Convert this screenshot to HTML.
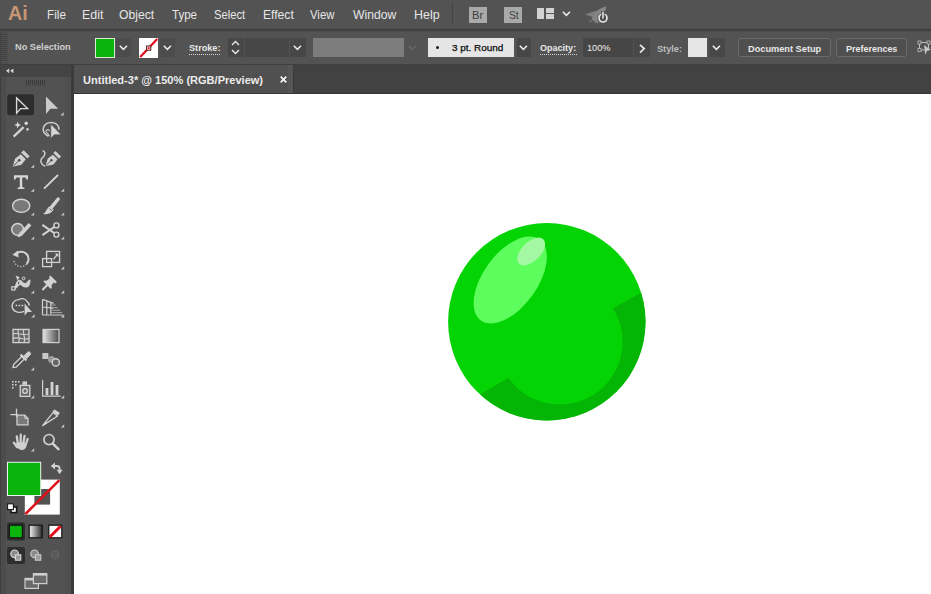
<!DOCTYPE html>
<html>
<head>
<meta charset="utf-8">
<style>
*{box-sizing:border-box;margin:0;padding:0}
html,body{width:931px;height:594px;overflow:hidden;background:#535353;font-family:"Liberation Sans",sans-serif;}
#app{position:relative;width:931px;height:594px;background:#535353;overflow:hidden}
.abs{position:absolute}
.t{position:absolute;white-space:nowrap;color:#e2e2e2;line-height:1;transform-origin:0 50%}
/* menu bar */
#menubar{position:absolute;left:0;top:0;width:931px;height:30px;background:#535353}
#menubar .m{font-size:13.5px;top:7.6px;color:#e6e6e6}
#sep1{position:absolute;left:0;top:28px;width:931px;height:4px;background:linear-gradient(180deg,#4d4d4d 0 1px,#404040 1px 2px,#414141 2px 3px,#4e4e4e 3px 4px)}
/* control bar */
#ctrl{position:absolute;left:0;top:32px;width:931px;height:32px;background:#535353}
#ctrl0{position:absolute;left:0;top:31px;width:931px;height:1px;background:#535353}
.lbl{font-size:10.6px;color:#e8e8e8;font-weight:bold}
.dk{position:absolute;background:#464646}
svg{position:absolute;overflow:visible}
/* tab strip */
#tabstrip{position:absolute;left:72px;top:64px;width:859px;height:30px;background:#424242}
#tab{position:absolute;left:74px;top:65px;width:218.5px;height:28px;background:#505050}
#canvas{position:absolute;left:74px;top:94px;width:857px;height:500px;background:#fff}
/* toolbox */
#tbhead{position:absolute;left:0;top:64px;width:72px;height:13px;background:#444}
#tools{position:absolute;left:0;top:77px;width:72px;height:517px;background:linear-gradient(90deg,#3e3e3e 0 1px,#4c4c4c 1px 6px,#525252 6px 65px,#4f4f4f 65px 71px,#444 71px 72px)}
#tbsep{position:absolute;left:71.4px;top:64px;width:2.6px;height:530px;background:#3b3b3b}
#tabline{position:absolute;left:74px;top:92.6px;width:857px;height:1.4px;background:#363636}
#topline{position:absolute;left:0;top:64px;width:931px;height:1px;background:#3f3f3f}
</style>
</head>
<body>
<div id="app">
  <!-- MENU BAR -->
  <div id="menubar">
    <div class="t" style="left:8px;top:3.9px;font-size:19.7px;font-weight:bold;color:#c69674">Ai</div>
    <div class="t m" style="left:46.6px;transform:scaleX(.869)">File</div>
    <div class="t m" style="left:81.6px;transform:scaleX(.92)">Edit</div>
    <div class="t m" style="left:119.3px;transform:scaleX(.902)">Object</div>
    <div class="t m" style="left:171.6px;transform:scaleX(.855)">Type</div>
    <div class="t m" style="left:214px;transform:scaleX(.831)">Select</div>
    <div class="t m" style="left:262.7px;transform:scaleX(.898)">Effect</div>
    <div class="t m" style="left:310px;transform:scaleX(.841)">View</div>
    <div class="t m" style="left:353.2px;transform:scaleX(.901)">Window</div>
    <div class="t m" style="left:413.8px;transform:scaleX(.922)">Help</div>
    <div class="abs" style="left:452px;top:2px;width:1px;height:22px;background:#454545"></div>
    <div class="abs" style="left:468.6px;top:6.8px;width:18px;height:16px;background:#a9a9a9"></div>
    <div class="t" style="left:472px;top:9.6px;font-size:11.4px;color:#3e3e3e;transform:scaleX(.98)">Br</div>
    <div class="abs" style="left:504.4px;top:6.8px;width:17.2px;height:16px;background:#a9a9a9"></div>
    <div class="t" style="left:508.6px;top:9.6px;font-size:11.4px;color:#3e3e3e;transform:scaleX(.9)">St</div>
    <!-- workspace icon -->
    <div class="abs" style="left:537px;top:8px;width:7px;height:11px;background:#d2d2d2"></div>
    <div class="abs" style="left:545.6px;top:8px;width:8.8px;height:5.2px;background:#d2d2d2"></div>
    <div class="abs" style="left:545.6px;top:14.4px;width:8.8px;height:4.6px;background:#d2d2d2"></div>
    <svg style="left:562.4px;top:11.2px" width="9" height="6"><path d="M.8 .8 L4.4 4.4 L8 .8" stroke="#ececec" stroke-width="1.5" fill="none"/></svg>
    <!-- rocket -->
    <svg style="left:584px;top:4px" width="26" height="22" viewBox="584 4 26 22">
      <path d="M592 19.5 C592 14 598 8 606.4 6.4 C605.6 14 600 20.4 595 22 Z" fill="#858585"/>
      <path d="M585 14.6 L596.4 10.4 L592.6 17 Z" fill="#7e7e7e"/>
      <path d="M594.6 23.4 L598.4 18.4 L600 22.4 Z" fill="#7e7e7e"/>
      <path d="M590.8 19 L588.6 22.8 L593 21.4 Z" fill="#6c6c6c"/>
      <circle cx="603" cy="18" r="5.6" fill="#535353"/>
      <circle cx="603" cy="18" r="4" fill="none" stroke="#e6e6e6" stroke-width="1.7"/>
      <rect x="601.4" y="11" width="3.2" height="8" fill="#3c3c3c"/>
      <rect x="602.2" y="11.6" width="1.6" height="7" fill="#eaeaea"/>
    </svg>
  </div>
  <div id="sep1"></div>

  <!-- CONTROL BAR -->
  <div id="ctrl">
    <div class="abs" style="left:0;top:0;width:7.5px;height:32px;background:#4d4d4d"></div>
    <div class="abs" style="left:1px;top:2px;width:6px;height:28px;background:repeating-linear-gradient(180deg,#404040 0 1px,#525252 1px 2px)"></div>
    <div class="abs" style="left:0;top:0;width:1px;height:32px;background:#434343"></div>
    <div class="t" style="left:15px;top:10.8px;color:#cfcfcf;font-size:9.1px;font-weight:bold;transform:scaleX(1.012)">No Selection</div>
    <!-- fill swatch -->
    <div class="abs" style="left:94.6px;top:5.6px;width:20px;height:20px;background:#0bb40b;border:1px solid #d4ecd4"></div>
    <div class="dk" style="left:116px;top:6px;width:15px;height:19px;background:#4c4c4c"></div>
    <svg style="left:119.4px;top:13.2px" width="9" height="6"><path d="M.8 .8 L4.4 4.4 L8 .8" stroke="#ececec" stroke-width="1.5" fill="none"/></svg>
    <!-- stroke swatch -->
    <div class="abs" style="left:139px;top:5.6px;width:19.4px;height:20px;background:#fff"></div>
    <svg style="left:139px;top:5.6px" width="19.4" height="20"><path d="M1.2 19 L18.2 1" stroke="#dc0a1c" stroke-width="2.2"/><rect x="7.6" y="8" width="4.2" height="4.2" fill="#fff" stroke="#5a1010" stroke-width="1"/><rect x="8.8" y="9.2" width="1.8" height="1.8" fill="#dc0a1c"/></svg>
    <div class="dk" style="left:160px;top:6px;width:15px;height:19px;background:#4c4c4c"></div>
    <svg style="left:163.2px;top:13.2px" width="9" height="6"><path d="M.8 .8 L4.4 4.4 L8 .8" stroke="#ececec" stroke-width="1.5" fill="none"/></svg>
    <!-- Stroke -->
    <div class="t lbl" style="left:189px;top:11.4px;font-size:9.5px;transform:scaleX(.961)">Stroke:</div>
    <div class="abs" style="left:189px;top:22px;width:32px;height:1px;background:repeating-linear-gradient(90deg,#d6d6d6 0 1px,transparent 1px 2px)"></div>
    <div class="dk" style="left:228px;top:6.4px;width:77.6px;height:18.6px;background:#474747"></div>
    <div class="abs" style="left:243.6px;top:6.4px;width:1px;height:18.6px;background:#525252"></div>
    <div class="abs" style="left:289px;top:6.4px;width:1px;height:18.6px;background:#525252"></div>
    <svg style="left:231.4px;top:8.4px" width="9" height="15"><path d="M1 5 L4.5 1.6 L8 5 M1 10 L4.5 13.4 L8 10" stroke="#e8e8e8" stroke-width="1.4" fill="none"/></svg>
    <svg style="left:292.6px;top:13.2px" width="9" height="6"><path d="M.8 .8 L4.4 4.4 L8 .8" stroke="#ececec" stroke-width="1.5" fill="none"/></svg>
    <!-- grey field -->
    <div class="abs" style="left:313.2px;top:6px;width:90.4px;height:19.4px;background:#7d7d7d"></div>
    <svg style="left:407.6px;top:13.2px" width="9" height="6"><path d="M.8 .8 L4.4 4.4 L8 .8" stroke="#656565" stroke-width="1.5" fill="none"/></svg>
    <!-- brush field -->
    <div class="abs" style="left:428px;top:6.1px;width:85.8px;height:18.8px;background:#e5e5e5"></div>
    <div class="abs" style="left:436px;top:13.6px;width:3.3px;height:3.3px;border-radius:50%;background:#1c1c1c"></div>
    <div class="t" style="left:452.2px;top:11.4px;font-size:9.5px;color:#0c0c0c;-webkit-text-stroke:.25px #0c0c0c;transform:scaleX(1.046)">3 pt. Round</div>
    <div class="dk" style="left:516.6px;top:6.4px;width:14.6px;height:18.2px;background:#474747"></div>
    <svg style="left:519.4px;top:13.2px" width="9" height="6"><path d="M.8 .8 L4.4 4.4 L8 .8" stroke="#ececec" stroke-width="1.5" fill="none"/></svg>
    <!-- Opacity -->
    <div class="t lbl" style="left:540px;top:11.4px;font-size:9.5px;transform:scaleX(.951)">Opacity:</div>
    <div class="abs" style="left:540px;top:22px;width:37px;height:1px;background:repeating-linear-gradient(90deg,#d6d6d6 0 1px,transparent 1px 2px)"></div>
    <div class="dk" style="left:583px;top:6.2px;width:50px;height:18.4px;background:#464646"></div>
    <div class="t" style="left:586.6px;top:11.4px;font-size:9.5px;color:#ececec;transform:scaleX(.97)">100%</div>
    <div class="dk" style="left:634px;top:6.2px;width:16px;height:18.4px;background:#484848"></div>
    <svg style="left:639px;top:11.6px" width="7" height="10"><path d="M1 .8 L5.2 4.6 L1 8.6" stroke="#ececec" stroke-width="1.6" fill="none"/></svg>
    <!-- Style -->
    <div class="t lbl" style="left:656.8px;top:11.7px;font-size:9.5px;color:#bcbcbc;transform:scaleX(.965)">Style:</div>
    <div class="abs" style="left:688px;top:6.1px;width:19.2px;height:18.8px;background:#e6e6e6"></div>
    <div class="dk" style="left:708.6px;top:6.4px;width:16.4px;height:18.2px;background:#484848"></div>
    <svg style="left:712px;top:13.4px" width="9" height="6"><path d="M.8 .8 L4.4 4.4 L8 .8" stroke="#ececec" stroke-width="1.5" fill="none"/></svg>
    <!-- buttons -->
    <div class="abs" style="left:738px;top:6.4px;width:93px;height:18.4px;border:1px solid #6a6a6a;border-radius:3px;background:#4f4f4f"></div>
    <div class="t lbl" style="left:747.7px;top:11.7px;font-size:9.5px;transform:scaleX(.97)">Document Setup</div>
    <div class="abs" style="left:836px;top:6.4px;width:71px;height:18.4px;border:1px solid #6a6a6a;border-radius:3px;background:#4f4f4f"></div>
    <div class="t lbl" style="left:845.9px;top:11.7px;font-size:9.5px;transform:scaleX(.944)">Preferences</div>
    <svg style="left:916px;top:7px" width="15" height="17"><path d="M3.5 3.5 H12.5 V11 H3.5 Z" stroke="#bdbdbd" fill="none" stroke-width="1"/><rect x="2" y="2" width="3" height="3" fill="#535353" stroke="#bdbdbd" stroke-width=".8"/><rect x="2" y="9.5" width="3" height="3" fill="#535353" stroke="#bdbdbd" stroke-width=".8"/><rect x="11" y="2" width="3" height="3" fill="#535353" stroke="#bdbdbd" stroke-width=".8"/><path d="M8 6 L15 11 L11 11.6 L9.4 16 Z" fill="#c8c8c8"/></svg>
  </div>

  <!-- TAB STRIP -->
  <div id="tabstrip"></div>
  <div id="tab"></div>
  <div id="tabline"></div>
  <div class="abs" style="left:288px;top:65px;width:4.5px;height:28px;background:#555"></div>
  <div class="abs" style="left:292.5px;top:65px;width:1.2px;height:28px;background:#3a3a3a"></div>
  <div class="t" style="left:83.4px;top:74.1px;font-size:11.6px;font-weight:bold;color:#ececec;transform:scaleX(.952)">Untitled-3* @ 150% (RGB/Preview)</div>
  <svg style="left:279.6px;top:75.6px" width="7" height="7"><path d="M.7 .7 L6.3 6.3 M6.3 .7 L.7 6.3" stroke="#f0f0f0" stroke-width="1.8"/></svg>
  <div id="canvas">
    <svg style="left:-74px;top:-94px" width="931" height="594" viewBox="0 0 931 594">
      <defs><clipPath id="bc"><circle cx="546.8" cy="321.8" r="98.7"/></clipPath></defs>
      <circle cx="546.8" cy="321.8" r="98.7" fill="#04d304"/>
      <path clip-path="url(#bc)" d="M660 282.2 L605.8 312.3 L516.6 373.3 L465 403.2 V440 H660 Z" fill="#05b505"/>
      <circle cx="559.8" cy="341.8" r="62.8" fill="#04d304"/>
      <ellipse cx="510.2" cy="280" rx="50" ry="27" transform="rotate(-54 510.2 280)" fill="#5cfd5c"/>
      <ellipse cx="531.2" cy="251.5" rx="17.2" ry="9.5" transform="rotate(-45 531.2 251.5)" fill="#a4f8a4"/>
    </svg>
  </div>

  <!-- TOOLBOX -->
  <div id="tbhead"></div>
  <div id="tools"></div>
  <div id="tbsep"></div>
  <div id="topline"></div>
  <svg id="tb" style="left:0;top:0" width="74" height="594" viewBox="0 0 74 594">
    <defs>
      <linearGradient id="gr1" x1="0" x2="1" y1="0" y2="0"><stop offset="0" stop-color="#e6e6e6"/><stop offset="1" stop-color="#4a4a4a"/></linearGradient>
      <linearGradient id="gr2" x1="0" x2="1" y1="0" y2="0"><stop offset="0" stop-color="#f4f4f4"/><stop offset="1" stop-color="#2a2a2a"/></linearGradient>
    </defs>
    <!-- header -->
    <path d="M9.2 68.4 L6 70.8 L9.2 73.2 Z M13.4 68.4 L10.2 70.8 L13.4 73.2 Z" fill="#d8d8d8"/>
    <g stroke="#3b3b3b" stroke-width="1">
      <path d="M26.5 80v5.5M28.5 80v5.5M30.5 80v5.5M32.5 80v5.5M34.5 80v5.5M36.5 80v5.5M38.5 80v5.5M40.5 80v5.5M42.5 80v5.5M44.5 80v5.5"/>
    </g>
    <!-- R1 -->
    <rect x="7.2" y="94.3" width="26.8" height="21" rx="2.5" fill="#2d2d2d"/>
    <path d="M16.6 98 V113.2 L20.6 108.6 H27.6 Z" fill="none" stroke="#dadada" stroke-width="1.4" stroke-linejoin="miter"/>
    <path d="M46 96.6 V114 L50.4 108.8 H58.2 Z" fill="#cacaca"/>
    <path d="M63.7 112.3 V115.5 H60.3 Z" fill="#c4c4c4"/>
    <!-- R2 wand -->
    <path d="M13.6 136.6 L23.6 127.2" stroke="#d2d2d2" stroke-width="2.3"/>
    <path d="M17.7 121.4 L18.7 123.9 L21.2 124.9 L18.7 125.9 L17.7 128.4 L16.7 125.9 L14.2 124.9 L16.7 123.9 Z" fill="#d8d8d8"/>
    <circle cx="26.2" cy="123.3" r="1.7" fill="#dcdcdc"/>
    <circle cx="27.5" cy="129.4" r="1.3" fill="#d0d0d0"/>
    <!-- lasso -->
    <path d="M49.6 135.8 C45.6 135.6 43 132.6 43.2 129 C43.6 124.6 47.6 122.2 51.6 122.4 C56 122.6 59.2 125.2 58.8 129.6" fill="none" stroke="#cdcdcd" stroke-width="1.5"/>
    <path d="M49.4 131.2 a1.7 1.7 0 1 0 -2.6 1.6 c1.6 .6 2 2.4 .6 3.8" fill="none" stroke="#cdcdcd" stroke-width="1.1"/>
    <path d="M50.8 124 V138.6 L54.2 134.8 H61.2 Z" fill="#d6d6d6" stroke="#535353" stroke-width=".7"/>
    <!-- R3 pens -->
    <g transform="translate(12.6,149.8)"><path d="M0 17 L2.6 8.6 L8.2 4.4 L13.2 9.4 L8.8 15 Z" fill="#d0d0d0"/>
        <path d="M8.6 2.6 L11 0.4 L17 6.4 L14.8 8.8 Z" fill="#d0d0d0"/>
        <path d="M0.6 16.4 L6 11" stroke="#4a4a4a" stroke-width="1"/>
        <circle cx="6.6" cy="10.4" r="1.3" fill="#4a4a4a"/></g>
    <path d="M34.2 164.5 V167.7 H30.8 Z" fill="#c4c4c4"/>
    <g transform="translate(45.4,150.6) scale(.92)"><path d="M0 17 L2.6 8.6 L8.2 4.4 L13.2 9.4 L8.8 15 Z" fill="#d0d0d0"/>
        <path d="M8.6 2.6 L11 0.4 L17 6.4 L14.8 8.8 Z" fill="#d0d0d0"/>
        <path d="M0.6 16.4 L6 11" stroke="#4a4a4a" stroke-width="1"/>
        <circle cx="6.6" cy="10.4" r="1.3" fill="#4a4a4a"/></g>
    <path d="M42.6 150.6 C46.6 152 44.6 156 42.2 158 C39.6 160.4 41 165 45 166.4" fill="none" stroke="#d0d0d0" stroke-width="1.4"/>
    <!-- R4 -->
    <path d="M13.9 175.2 H28 V179.6 H26.4 C26.4 178 25.8 177.4 24.4 177.4 H22.2 V186.6 C22.2 187.4 22.8 187.6 24.4 187.6 V188.9 H17.6 V187.6 C19.2 187.6 19.8 187.4 19.8 186.6 V177.4 H17.6 C16.2 177.4 15.6 178 15.6 179.6 H13.9 Z" fill="#d6d6d6"/>
    <path d="M34.2 188.6 V191.8 H30.8 Z" fill="#c4c4c4"/>
    <path d="M44 188.6 L58 175" stroke="#d2d2d2" stroke-width="1.9"/>
    <path d="M64.2 188.6 V191.8 H60.8 Z" fill="#c4c4c4"/>
    <!-- R5 -->
    <ellipse cx="21.2" cy="205.8" rx="8.6" ry="6.6" fill="#797979" stroke="#d4d4d4" stroke-width="1.4"/>
    <path d="M34.2 212.4 V215.6 H30.8 Z" fill="#c4c4c4"/>
    <path d="M58.2 199 L52 206.6" stroke="#d2d2d2" stroke-width="3.4" stroke-linecap="round"/>
    <path d="M50 206 L53.6 209.4 C52 213 47.6 214.8 43.2 214 C46 212.6 46.4 208.4 50 206 Z" fill="#d2d2d2"/>
    <path d="M49.6 208.6 L52 210.8" stroke="#535353" stroke-width=".9"/>
    <path d="M64.2 212.4 V215.6 H60.8 Z" fill="#c4c4c4"/>
    <!-- R6 -->
    <circle cx="17.6" cy="229.4" r="5.9" fill="#7c7c7c" stroke="#d4d4d4" stroke-width="1.5"/>
    <path d="M30 224.2 L21 234" stroke="#d2d2d2" stroke-width="3.6"/>
    <path d="M19.4 232.6 L22.6 235.6 L17.6 237.6 Z" fill="#d2d2d2"/>
    <path d="M34.2 236.4 V239.6 H30.8 Z" fill="#c4c4c4"/>
    <circle cx="56.4" cy="225.4" r="2.5" fill="none" stroke="#d2d2d2" stroke-width="1.4"/>
    <circle cx="56.4" cy="234.6" r="2.5" fill="none" stroke="#d2d2d2" stroke-width="1.4"/>
    <path d="M54.2 227 L42.4 235.2 M54.2 233 L42.4 224.8" stroke="#d2d2d2" stroke-width="2.1"/>
    <path d="M64.2 236.4 V239.6 H60.8 Z" fill="#c4c4c4"/>
    <!-- R7 rotate -->
    <path d="M16.6 253.4 A7.3 7.3 0 0 1 26.6 264" fill="none" stroke="#d2d2d2" stroke-width="2"/>
    <path d="M26.6 264 A7.3 7.3 0 0 1 13.8 260.4" fill="none" stroke="#bcbcbc" stroke-width="1.3" stroke-dasharray="1.4 1.5"/>
    <path d="M12.4 254.8 L18 250.6 L18.6 257.6 Z" fill="#d2d2d2"/>
    <path d="M34.2 266.3 V269.5 H30.8 Z" fill="#c4c4c4"/>
    <!-- scale -->
    <rect x="46.6" y="251.4" width="13" height="11" fill="none" stroke="#d2d2d2" stroke-width="1.3"/>
    <rect x="42.6" y="258.6" width="9" height="8" fill="none" stroke="#d2d2d2" stroke-width="1.3"/>
    <path d="M53.4 259.4 L57.2 254.6" stroke="#d2d2d2" stroke-width="1.4"/>
    <path d="M54.8 253.4 H58.4 V257.2 Z" fill="#d2d2d2"/>
    <path d="M64.2 266.3 V269.5 H60.8 Z" fill="#c4c4c4"/>
    <!-- R8 width -->
    <path d="M13 289.4 C16 286 15 282 18.4 280 C21.6 278.4 22.4 283.4 25.4 283 C27.6 282.6 27.6 279.4 30.4 279.4 C30.6 283.6 29.6 287.6 25.6 287.6 C22 287.6 21.6 284.6 19.6 285.2 C17.4 286 17.4 289.4 13 289.4 Z" fill="#d0d0d0"/>
    <path d="M15.6 275.6 l4 1.6 l-2.2 3.2 z" fill="#d0d0d0"/>
    <rect x="11.8" y="286.8" width="3.2" height="3.2" fill="#535353" stroke="#e0e0e0" stroke-width="1.1"/>
    <circle cx="18.6" cy="283" r="1.4" fill="#535353" stroke="#d8d8d8" stroke-width="1"/>
    <circle cx="23.6" cy="278.4" r="1.4" fill="#535353" stroke="#d8d8d8" stroke-width="1"/>
    <path d="M34.2 290.3 V293.5 H30.8 Z" fill="#c4c4c4"/>
    <!-- pin -->
    <path d="M50.4 275.4 L57 282 L55 283.4 L53.6 282.6 L51.4 285.8 L52 288 L50.6 288.8 L47.2 285.6 L42.4 290.6 L41.8 290 L46.6 285 L43.4 281.6 L44.4 280.4 L46.4 280.8 L49.6 278.4 L49 277 Z" fill="#d0d0d0"/>
    <path d="M42.6 289.8 L48 284.2" stroke="#d0d0d0" stroke-width="2.2"/>
    <path d="M64.2 290.3 V293.5 H60.8 Z" fill="#c4c4c4"/>
    <!-- R9 shape builder -->
    <path d="M24 311.4 C20 313.4 14 312.4 12.4 308 C11 303.6 14.6 299.4 19 299.6 C21.6 297.8 26 298.8 27 301.6 C28.6 302.4 29.4 304 29 305.6" fill="none" stroke="#d0d0d0" stroke-width="1.4"/>
    <path d="M15.6 305.4 h1.6 M18.6 305.4 h1.6 M21.6 305.4 h1.6" stroke="#d8d8d8" stroke-width="1.5"/>
    <path d="M24.6 303.6 V315.4 L27.6 312 H32 Z" fill="#d4d4d4"/>
    <path d="M34.6 314.3 V317.5 H31.2 Z" fill="#c4c4c4"/>
    <!-- perspective grid -->
    <g fill="none" stroke="#d0d0d0" stroke-width="1.2">
      <path d="M42.5 299.4 V315 M46.8 300.8 V314.6 M50.8 302.4 V314 M42.5 299.4 L53.6 303.4 M42.5 307 L53 308.2 M42.5 315 H63"/>
      <path d="M51 305 H55.6 M51 307.6 H57.6 M51 310.2 H60 M51 312.6 H62" stroke="#a8a8a8" stroke-width="1"/>
    </g>
    <path d="M64.2 314.3 V317.5 H60.8 Z" fill="#c4c4c4"/>
    <!-- R10 mesh -->
    <rect x="13" y="329.4" width="16" height="13.2" fill="#666" stroke="#d2d2d2" stroke-width="1.3"/>
    <g fill="none" stroke="#d2d2d2" stroke-width="1.1">
      <path d="M13 334 C17 331.6 24 336.8 29 333.6 M13 338.6 C18 336 24 341 29 338.2 M18.4 329.4 C16.4 333.6 21 338 18.6 342.6 M23.8 329.4 C22 333.6 26.4 338 24 342.6"/>
    </g>
    <rect x="43" y="329.4" width="16" height="13.2" fill="url(#gr1)" stroke="#d2d2d2" stroke-width="1.2"/>
    <!-- R11 eyedropper -->
    <path d="M13 367.6 L13.6 364.6 L22 356.2 L24.6 358.8 L16.2 367.2 Z" fill="none" stroke="#d2d2d2" stroke-width="1.3"/>
    <path d="M20.6 354.6 L26.4 360.4" stroke="#d2d2d2" stroke-width="2.2"/>
    <path d="M24 355.8 L27.4 352.4 a1.8 1.8 0 0 1 2.6 2.6 L26.6 358.4 Z" fill="#d2d2d2" stroke="#d2d2d2" stroke-width="1"/>
    <path d="M34.2 367.3 V370.5 H30.8 Z" fill="#c4c4c4"/>
    <!-- blend -->
    <rect x="42.4" y="353" width="6" height="6" fill="#c8c8c8"/>
    <circle cx="51.4" cy="359.4" r="3.4" fill="#9c9c9c"/>
    <circle cx="55.8" cy="362.4" r="3.6" fill="#666" stroke="#d4d4d4" stroke-width="1.4"/>
    <!-- R12 sprayer -->
    <g fill="#cfcfcf">
      <rect x="12" y="381" width="1.6" height="1.6"/><rect x="15" y="381" width="1.6" height="1.6"/><rect x="18" y="381" width="1.6" height="1.6"/>
      <rect x="12" y="384" width="1.6" height="1.6"/><rect x="15" y="384" width="1.6" height="1.6"/>
      <rect x="12" y="387" width="1.6" height="1.6"/>
      <rect x="22.4" y="381.4" width="4.6" height="3.4"/>
    </g>
    <rect x="20.2" y="385.4" width="9.6" height="11" fill="#666" stroke="#d2d2d2" stroke-width="1.3"/>
    <circle cx="25" cy="391" r="2.3" fill="none" stroke="#d8d8d8" stroke-width="1.3"/>
    <path d="M34.2 395.3 V398.5 H30.8 Z" fill="#c4c4c4"/>
    <!-- graph -->
    <path d="M42.6 380 V396.2 H60.6" fill="none" stroke="#d2d2d2" stroke-width="1.2"/>
    <rect x="45.6" y="388" width="2.8" height="7" fill="#d2d2d2"/>
    <rect x="50.6" y="382" width="2.8" height="13" fill="#d2d2d2"/>
    <rect x="55.6" y="385" width="2.8" height="10" fill="#d2d2d2"/>
    <path d="M64.2 395.3 V398.5 H60.8 Z" fill="#c4c4c4"/>
    <!-- R13 artboard -->
    <path d="M10.4 414.6 H18 M16.5 408.8 V417" stroke="#d2d2d2" stroke-width="1.3"/>
    <path d="M17 415.2 H24.8 L28 418.4 V424.8 H17 Z" fill="#7a7a7a" stroke="#d2d2d2" stroke-width="1.3"/>
    <path d="M24.8 415.2 V418.4 H28" fill="none" stroke="#d2d2d2" stroke-width="1"/>
    <!-- slice -->
    <path d="M42.6 425.6 L53 412.6 L57.6 416 Z" fill="#535353" stroke="#d2d2d2" stroke-width="1.3" stroke-linejoin="round"/>
    <path d="M52.4 411.6 L54.4 409.4 L59.8 412.8 L58 415.6 Z" fill="#d4d4d4"/>
    <path d="M42.6 425.6 L46 421.4 L47.6 422.6 Z" fill="#d2d2d2"/>
    <path d="M64.2 424.3 V427.5 H60.8 Z" fill="#c4c4c4"/>
    <!-- R14 hand -->
    <g stroke="#d0d0d0" stroke-width="2.3" stroke-linecap="round" fill="none">
      <path d="M17.8 443.4 L16.8 436.4"/>
      <path d="M20.6 442.6 L20.8 434.6"/>
      <path d="M23.4 443 L24.6 435.8"/>
      <path d="M25.6 445 L27.6 439"/>
      <path d="M17 447 L13.8 442.6"/>
    </g>
    <path d="M16 443.6 C16 441.6 26.6 441.6 26.6 444.4 C26.6 447 25 450 21.8 450 C18.6 450 16 447 16 443.6 Z" fill="#d0d0d0"/>
    <path d="M34.2 448.3 V451.5 H30.8 Z" fill="#c4c4c4"/>
    <circle cx="49" cy="439.6" r="5.1" fill="none" stroke="#d2d2d2" stroke-width="1.7"/>
    <path d="M53 443.8 L58.4 449.2" stroke="#d2d2d2" stroke-width="2.6" stroke-linecap="round"/>
    <!-- fill / stroke -->
    <rect x="24.8" y="479.6" width="35" height="35" fill="#fff"/>
    <rect x="34.4" y="489" width="15.7" height="15.6" fill="#535353"/>
    <path d="M25.4 514 L59.4 480.2" stroke="#e0101a" stroke-width="2.5"/>
    <rect x="7" y="461.8" width="34.2" height="34.2" fill="#eaf6ea"/>
    <rect x="8" y="462.8" width="32.2" height="32.2" fill="#0bb40b"/>
    <!-- swap arrows -->
    <path d="M53.4 466 H57 Q59.6 466 59.6 468.6 V470.6" fill="none" stroke="#d0d0d0" stroke-width="1.8"/>
    <path d="M55 462.6 L50.8 466 L55 469.4 Z M56.6 469.8 L59.6 474.2 L62.6 469.8 Z" fill="#d0d0d0"/>
    <!-- default -->
    <rect x="11" y="507" width="5.6" height="5.6" fill="#fff" stroke="#161616" stroke-width="1.6"/>
    <rect x="7.6" y="503.8" width="5.8" height="5.8" fill="#fff" stroke="#161616" stroke-width="1.1"/>
    <!-- color mode buttons -->
    <rect x="7" y="522.4" width="18" height="18" rx="2" fill="#2d2d2d"/>
    <rect x="9.4" y="525.2" width="13" height="12.6" fill="#0bb40b" stroke="#141414" stroke-width="1.2"/>
    <rect x="29.2" y="525.2" width="13" height="12.6" fill="url(#gr2)" stroke="#141414" stroke-width="1.2"/>
    <rect x="48.8" y="525.2" width="13" height="12.6" fill="#fff" stroke="#141414" stroke-width="1.2"/>
    <path d="M49.8 537 L60.8 526" stroke="#e0101a" stroke-width="3"/>
    <!-- draw modes -->
    <rect x="7" y="547" width="18" height="17" rx="2" fill="#2d2d2d"/>
    <circle cx="14.6" cy="553.8" r="3.8" fill="#8a8a8a" stroke="#d8d8d8" stroke-width="1.2"/>
    <rect x="15.4" y="554.8" width="5.4" height="5.4" fill="#9a9a9a" stroke="#d8d8d8" stroke-width="1.1"/>
    <circle cx="34.6" cy="553.8" r="3.8" fill="#8a8a8a" stroke="#c8c8c8" stroke-width="1.2"/>
    <rect x="35.4" y="554.8" width="5.4" height="5.4" fill="#9a9a9a" stroke="#c8c8c8" stroke-width="1.1"/>
    <circle cx="55" cy="555" r="3.8" fill="#5a5a5a" stroke="#666" stroke-width="1.2"/>
    <!-- screen mode -->
    <rect x="25" y="578.4" width="13.4" height="10" fill="#6a6a6a" stroke="#cfcfcf" stroke-width="1.2"/>
    <path d="M25 579.4 H38.4" stroke="#cfcfcf" stroke-width="2"/>
    <rect x="33.4" y="573.6" width="13.4" height="10" fill="#6a6a6a" stroke="#cfcfcf" stroke-width="1.2"/>
    <path d="M33.4 574.6 H46.8" stroke="#cfcfcf" stroke-width="2"/>
  </svg>
</div>
</body>
</html>
